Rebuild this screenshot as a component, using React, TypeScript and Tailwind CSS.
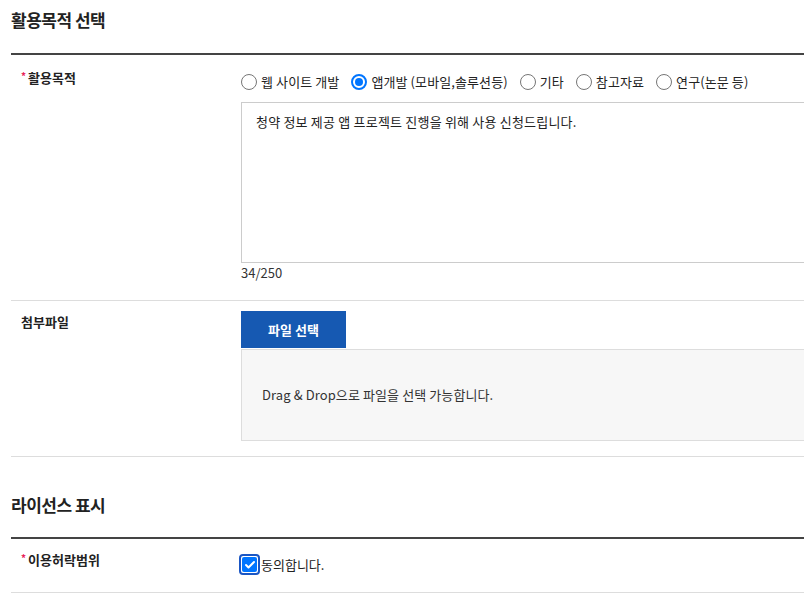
import { Check } from 'lucide-react';

const PURPOSES = [
  { label: '웹 사이트 개발', checked: false },
  { label: '앱개발 (모바일,솔루션등)', checked: true },
  { label: '기타', checked: false },
  { label: '참고자료', checked: false },
  { label: '연구(논문 등)', checked: false },
];

const font = { fontFamily: '"Noto Sans CJK KR", "Noto Sans", sans-serif' };

function Radio({ checked }: { checked: boolean }) {
  return checked ? (
    <span className="flex h-4 w-4 shrink-0 items-center justify-center rounded-full border-2 border-[#0075ff] bg-white">
      <span className="h-2 w-2 rounded-full bg-[#0075ff]" />
    </span>
  ) : (
    <span className="h-4 w-4 shrink-0 rounded-full border border-[#767676] bg-white" />
  );
}

function Label({ text, required }: { text: string; required?: boolean }) {
  return (
    <div className="w-[230px] shrink-0 pl-[10px] text-[13px] font-bold text-[#222]">
      {required && <span className="relative -top-[3px] mr-[2px] text-[10px] text-[#e8225a]">*</span>}
      {text}
    </div>
  );
}

export default function App() {
  return (
    <div className="h-[602px] w-[804px] overflow-hidden bg-white text-[#222]" style={font}>
      <div className="w-[1000px] pl-[11px]">
        {/* 활용목적 선택 */}
        <h2 className="pt-[8px] text-[17px] font-bold leading-[24px] tracking-[-0.5px]">활용목적 선택</h2>
        <div className="mt-[21px] h-[2px] bg-[#444]" />

        <div className="flex border-b border-[#ddd] pt-[12px] pb-[18px]">
          <div className="pt-[2px] leading-[18px]">
            <Label text="활용목적" required />
          </div>
          <div className="flex-1">
            <div className="mt-[5px] flex items-center gap-[12px] text-[13px] leading-[20px] tracking-[0.1px]">
              {PURPOSES.map((p) => (
                <label key={p.label} className="flex items-center gap-[4px]">
                  <Radio checked={p.checked} />
                  <span>{p.label}</span>
                </label>
              ))}
            </div>
            <div className="mt-[10px] h-[161px] w-[700px] border border-[#ccc] px-[14px] py-[9px] text-[13px] leading-[20px] tracking-[0.2px]">
              청약 정보 제공 앱 프로젝트 진행을 위해 사용 신청드립니다.
            </div>
            <p className="mt-[1px] text-[13px] leading-[18px] text-[#333]">34/250</p>
          </div>
        </div>

        {/* 첨부파일 */}
        <div className="flex border-b border-[#ddd] pt-[10px] pb-[15px]">
          <div className="pt-[2px] leading-[18px]">
            <Label text="첨부파일" />
          </div>
          <div className="flex-1">
            <button className="h-[37px] w-[105px] bg-[#1659b2] text-[13px] font-bold text-white">파일 선택</button>
            <div className="mt-[1px] flex h-[92px] w-[700px] items-center border border-[#ddd] bg-[#f7f7f7] pl-[20px] text-[13px] tracking-[0.1px] text-[#333]">
              Drag &amp; Drop으로 파일을 선택 가능합니다.
            </div>
          </div>
        </div>

        {/* 라이선스 표시 */}
        <h2 className="mt-[36px] text-[17px] font-bold leading-[24px] tracking-[-0.5px]">라이선스 표시</h2>
        <div className="mt-[20px] h-[2px] bg-[#444]" />

        <div className="flex items-start border-b border-[#ddd] pt-[12px] pb-[17px]">
          <div className="leading-[18px]">
            <Label text="이용허락범위" required />
          </div>
          <div className="mt-[3px] flex items-center text-[13px] leading-[20px]">
            <span className="-ml-[2px] flex h-[21px] w-[21px] items-center justify-center rounded-[4px] border-2 border-[#1a56c4]">
              <span className="flex h-[15px] w-[15px] items-center justify-center rounded-[2px] bg-[#0075ff]">
                <Check size={12} strokeWidth={4} className="text-white" />
              </span>
            </span>
            <span className="ml-[1px]">동의합니다.</span>
          </div>
        </div>
      </div>
    </div>
  );
}
